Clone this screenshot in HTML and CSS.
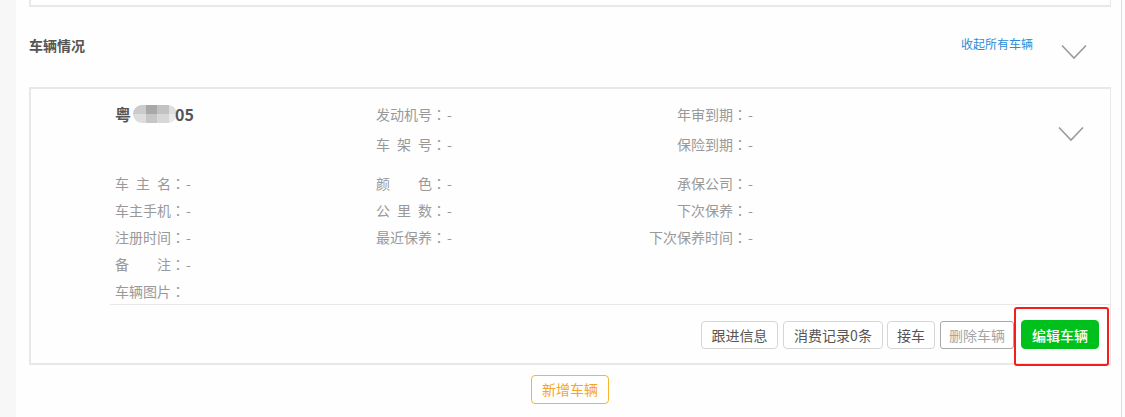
FILE: index.html
```html
<!DOCTYPE html>
<html lang="zh-CN">
<head>
<meta charset="utf-8">
<title>车辆情况</title>
<link rel="stylesheet" href="styles.css">
</head>
<body>
<div class="page">
  <div class="strip"></div>
  <div class="main">
    <div class="prev-card"></div>

    <div class="section-head">
      <h3 class="section-title">车辆情况</h3>
      <a class="collapse-all">收起所有车辆</a>
      <svg class="chev chev-head" width="26" height="16" viewBox="0 0 26 16"><polyline points="1,1.5 13,14 25,1.5" fill="none" stroke="#9a9a9a" stroke-width="1.6"/></svg>
    </div>

    <div class="vehicle-card">
      <div class="vc-top">
        <div class="grid grid-top">
          <div class="plate">粤<span class="mask"></span>05</div>
          <div class="field"><span class="lbl">发动机号</span><span class="val">：-</span></div>
          <div class="field f3"><span class="lbl">年审到期</span><span class="val">：-</span></div>
          <div></div>
          <div class="field"><span class="lbl">车 架 号</span><span class="val">：-</span></div>
          <div class="field f3"><span class="lbl">保险到期</span><span class="val">：-</span></div>
        </div>
        <svg class="chev chev-card" width="26" height="16" viewBox="0 0 26 16"><polyline points="1,1.5 13,14 25,1.5" fill="none" stroke="#9a9a9a" stroke-width="1.6"/></svg>
      </div>

      <div class="grid grid-low">
        <div class="field"><span class="lbl">车 主 名</span><span class="val">：-</span></div>
        <div class="field"><span class="lbl">颜 色</span><span class="val">：-</span></div>
        <div class="field f3"><span class="lbl">承保公司</span><span class="val">：-</span></div>

        <div class="field"><span class="lbl">车主手机</span><span class="val">：-</span></div>
        <div class="field"><span class="lbl">公 里 数</span><span class="val">：-</span></div>
        <div class="field f3"><span class="lbl">下次保养</span><span class="val">：-</span></div>

        <div class="field"><span class="lbl">注册时间</span><span class="val">：-</span></div>
        <div class="field"><span class="lbl">最近保养</span><span class="val">：-</span></div>
        <div class="field f3"><span class="lbl">下次保养时间</span><span class="val">：-</span></div>

        <div class="field"><span class="lbl">备 注</span><span class="val">：-</span></div>
        <div></div>
        <div></div>

        <div class="field"><span class="lbl">车辆图片</span><span class="val">：</span></div>
        <div></div>
        <div></div>
      </div>

      <div class="vc-footer">
        <button class="btn btn-follow">跟进信息</button>
        <button class="btn btn-records">消费记录0条</button>
        <button class="btn btn-pickup">接车</button>
        <button class="btn btn-disabled">删除车辆</button>
        <button class="btn btn-edit">编辑车辆</button>
      </div>
    </div>

    <div class="add-row">
      <button class="btn-add">新增车辆</button>
    </div>
  </div>
  <div class="right-gap"></div>
</div>
</body>
</html>
```

FILE: styles.css
```css
* { box-sizing: border-box; }

html, body {
  margin: 0;
  padding: 0;
  background: #ffffff;
}

body {
  font-family: "Noto Sans CJK SC", "Noto Sans", sans-serif;
  font-size: 14px;
  color: #555;
}

.page {
  display: flex;
  width: 1125px;
  height: 417px;
  overflow: hidden;
}

.strip {
  width: 16px;
  flex: none;
  background: #f7f7f7;
}

.main {
  flex: 1;
  background: #fefefe;
  border-right: 1px solid #dcdcdc;
  padding: 0 10px 0 13px;
}

.right-gap {
  width: 3px;
  flex: none;
  background: #fdfdfd;
}

.prev-card {
  height: 7px;
  border: 2px solid #e8e8e8;
  border-top: none;
  border-right-width: 1px;
}

.section-head {
  height: 80px;
  display: flex;
  align-items: flex-start;
  padding-top: 28px;
}

.section-title {
  margin: 0;
  font-size: 14px;
  line-height: 20px;
  font-weight: 600;
  color: #555;
}

.collapse-all {
  margin-left: auto;
  font-size: 12px;
  line-height: 20px;
  margin-top: -1px;
  color: #2f8bd6;
  cursor: pointer;
}

.chev {
  display: block;
  flex: none;
}

.chev-head {
  margin-left: 28px;
  margin-right: 24px;
  margin-top: 9px;
}

.vehicle-card {
  border: 2px solid #e8e8e8;
  border-right-width: 1px;
}

.vc-top {
  display: flex;
  padding-top: 10px;
}

.grid {
  display: grid;
  grid-template-columns: 261px 261px 1fr;
  padding-left: 84px;
}

.grid-top {
  flex: 1;
  grid-auto-rows: 30px;
}

.grid-low {
  grid-auto-rows: 27px;
  margin-top: 10px;
}

.chev-card {
  margin-top: 27px;
  margin-right: 26px;
}

.plate {
  font-size: 16px;
  font-weight: bold;
  color: #555;
  line-height: 30px;
  margin-top: -1px;
  display: flex;
  align-items: center;
}

.mask {
  display: inline-block;
  width: 44px;
  height: 18px;
  margin: 0 -2px 0 2px;
  border-radius: 9px;
  background:
    linear-gradient(180deg, rgba(255,255,255,0) 0 50%, rgba(255,255,255,0.35) 50% 100%),
    linear-gradient(90deg, #cbcbcd 0 30%, #a9a8a8 30% 55%, #c1c2c4 55% 82%, #dedede 82% 100%);
}

.field {
  display: flex;
  align-items: center;
  color: #999;
  white-space: nowrap;
}

.lbl {
  display: inline-block;
  width: 56px;
  text-align: justify;
  text-align-last: justify;
}

.f3 .lbl {
  width: 96px;
  text-align: right;
  text-align-last: right;
}

.val {
  color: #999;
  font-family: "Noto Sans CJK TC", "Noto Sans CJK SC", sans-serif;
  letter-spacing: 1px;
}

.vc-footer {
  margin-left: 79px;
  border-top: 1px solid #e8e8e8;
  padding: 16px 11px 14px 0;
  display: flex;
  justify-content: flex-end;
  align-items: flex-start;
  gap: 5px;
}

.btn {
  font-family: inherit;
  font-size: 14px;
  height: 28px;
  line-height: 26px;
  padding: 0;
  text-align: center;
  border: 1px solid #d6d6d6;
  border-radius: 4px;
  background: #fff;
  color: #555;
  cursor: pointer;
  margin: 0;
}

.btn-follow { width: 77px; }
.btn-records { width: 100px; }
.btn-pickup { width: 48px; margin-left: -1px; }

.btn-disabled {
  width: 74px;
  border-color: #a8a8a8;
  color: #a5a5a5;
  border-radius: 3px;
}

.btn-edit {
  position: relative;
  width: 78px;
  height: 29px;
  margin-top: -1px;
  margin-left: 2px;
  background: #00c11b;
  border-color: #00c11b;
  color: #fff;
  font-weight: 500;
}

.btn-edit::after {
  content: "";
  position: absolute;
  top: -14px;
  bottom: -18px;
  left: -8px;
  right: -11px;
  border: 2.5px solid #f41d1d;
  border-radius: 3px;
  pointer-events: none;
}

.add-row {
  display: flex;
  justify-content: center;
  padding-top: 10px;
}

.btn-add {
  font-family: inherit;
  font-size: 14px;
  height: 29px;
  line-height: 27px;
  padding: 0 10px;
  border: 1px solid #f8b62d;
  border-radius: 4px;
  background: #fff;
  color: #f5a623;
  cursor: pointer;
}
```
